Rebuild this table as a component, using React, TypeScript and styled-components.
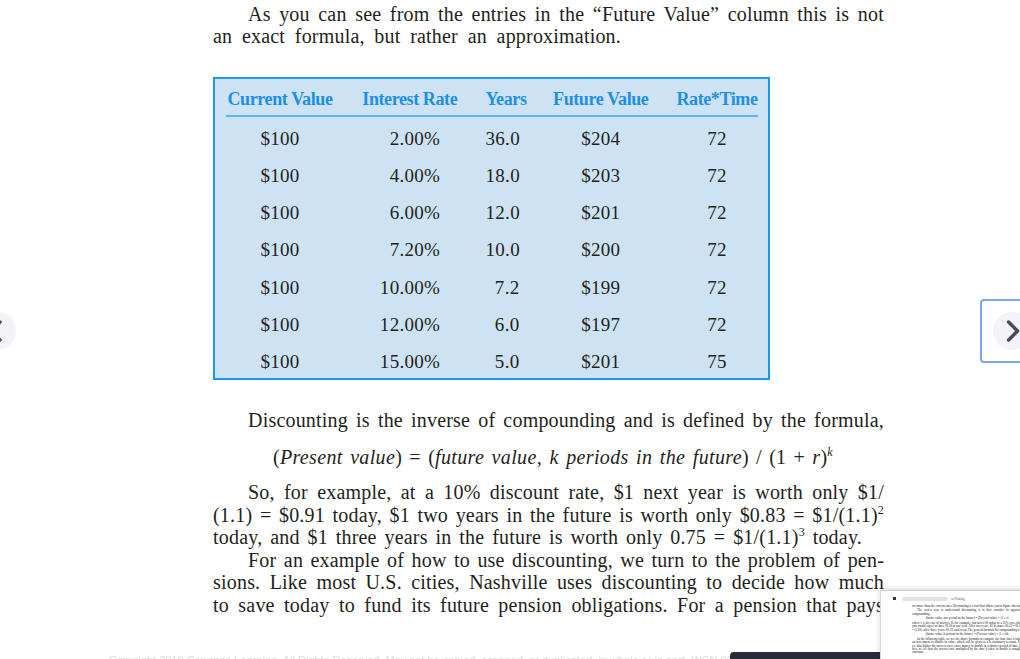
import React from 'react';
import styled, { createGlobalStyle } from 'styled-components';

const GlobalStyle = createGlobalStyle`
  html, body { margin: 0; padding: 0; background: #ffffff; }
  body {
    font-family: "Liberation Serif", "Times New Roman", serif;
    color: #231f20;
  }
  * { box-sizing: border-box; }
`;

const Screen = styled.div`
  position: relative;
  width: 1020px;
  height: 659px;
  overflow: hidden;
  background: #ffffff;
`;

const Article = styled.article`
  width: 884px;
  padding: 2.6px 0 0 213px;
  font-size: 20px;
  letter-spacing: 0.2px;
  line-height: 22.6px;
`;

const Paragraph = styled.div<{ $top?: number }>`
  margin-top: ${(p) => p.$top ?? 0}px;
`;

const Line = styled.span<{ $indent?: number; $width?: number }>`
  display: block;
  width: ${(p) => (p.$width ? `${p.$width}px` : '100%')};
  padding-left: ${(p) => p.$indent ?? 0}px;
  text-align: justify;
  text-align-last: justify;
`;

const I = styled.i`
  font-style: italic;
  letter-spacing: 0.35px;
`;

const Sup = styled.span`
  font-size: 0.6em;
  line-height: 0;
  position: relative;
  top: -0.65em;
`;

/* ---------- table ---------- */

const Table = styled.div`
  margin-top: 29.4px;
  width: 557px;
  border: 2px solid #1a98f0;
  background: #cde3f3;
  padding: 0 10px 0 11px;
  letter-spacing: 0;
`;

const cols = '108px 99px 40px 98px 82px';

const HeadRow = styled.div`
  display: grid;
  grid-template-columns: ${cols};
  justify-content: space-between;
  align-items: center;
  height: 38.3px;
  padding-top: 3px;
  border-bottom: 2px solid #5cb4ef;
`;

const HeadCell = styled.div`
  text-align: center;
  white-space: nowrap;
  font-size: 18px;
  font-weight: 700;
  letter-spacing: -0.4px;
  color: #1e8fe8;
  line-height: 20px;
`;

const Row = styled.div`
  display: grid;
  grid-template-columns: ${cols};
  justify-content: space-between;
  align-items: center;
  height: 37.25px;
  padding-top: 5px;
`;

const Cell = styled.div<{ $align: 'center' | 'right'; $pad?: number }>`
  text-align: ${(p) => p.$align};
  padding-right: ${(p) => p.$pad ?? 0}px;
  white-space: nowrap;
  font-size: 19px;
  letter-spacing: 0.3px;
  line-height: 20px;
  color: #231f20;
`;

/* ---------- footer ---------- */

const Footer = styled.footer`
  display: flex;
  align-items: flex-start;
  margin-top: 34.3px;
  padding-left: 109px;
  letter-spacing: 0;
`;

const Copyright = styled.span`
  width: 621px;
  overflow: hidden;
  white-space: nowrap;
  padding-top: 3px;
  font-family: "Liberation Sans", Arial, sans-serif;
  font-size: 11px;
  line-height: 13px;
  color: #dcdcdc;
`;

const ToolBar = styled.div`
  width: 170px;
  height: 24px;
  margin-top: 1px;
  background: #2a2a3b;
  border-radius: 4px 4px 0 0;
`;

/* ---------- overlays ---------- */

const NavButton = styled.button<{ $side: 'left' | 'right'; $focused?: boolean }>`
  position: absolute;
  top: 299px;
  left: ${(p) => (p.$side === 'left' ? '-35px' : '980px')};
  width: 64px;
  height: 64px;
  padding: 0;
  border: 2px solid ${(p) => (p.$focused ? '#7aa6f7' : 'transparent')};
  border-radius: 4px;
  background: transparent;
  display: flex;
  align-items: center;
  justify-content: center;
`;

const NavCircle = styled.span`
  width: 38px;
  height: 38px;
  border-radius: 50%;
  background: #f3f3f9;
  color: #4a4a56;
  display: flex;
  align-items: center;
  justify-content: center;
`;

const Thumb = styled.aside`
  position: absolute;
  left: 880px;
  top: 590px;
  width: 160px;
  height: 90px;
  overflow: hidden;
  background: #ffffff;
  border-top: 1px solid #cfcfcf;
  border-left: 1px solid #d8d8d8;
  box-shadow: 0 -1px 5px rgba(0, 0, 0, 0.18);
  padding: 5px 0 0 12px;
`;

const ThumbHead = styled.div`
  display: flex;
  align-items: center;
  gap: 3px;
  height: 5px;
`;

const ThumbSquare = styled.span`
  width: 3px;
  height: 3px;
  background: #333;
`;

const ThumbPill = styled.span`
  width: 46px;
  height: 4px;
  margin-left: 3px;
  border-radius: 2px;
  background: #e3e3e6;
`;

const ThumbLabel = styled.span`
  font-family: "Liberation Serif", serif;
  font-size: 12px;
  line-height: 12px;
  color: #555;
  transform: scale(0.28);
  transform-origin: left center;
  white-space: nowrap;
`;

const MiniPage = styled.div`
  margin: 3px 0 0 19px;
  width: 440px;
  transform: scale(0.25);
  transform-origin: top left;
  font-family: "Liberation Serif", serif;
  font-size: 12px;
  font-weight: 700;
  line-height: 13.5px;
  color: #6a6a6a;
  text-align: justify;
`;

const MiniP = styled.p<{ $center?: boolean; $indent?: boolean }>`
  margin: 0 0 5px 0;
  text-indent: ${(p) => (p.$indent ? '20px' : '0')};
  text-align: ${(p) => (p.$center ? 'center' : 'justify')};
`;

const Chevron = ({ dir }: { dir: 'left' | 'right' }) => (
  <svg width="36" height="36" viewBox="0 0 24 24" fill="none" stroke="currentColor" strokeWidth="2.3" strokeLinecap="round" strokeLinejoin="round">
    {dir === 'right' ? <path d="M9.7 6l6 6-6 6" /> : <path d="M14 6l-6 6 6 6" />}
  </svg>
);

type RowData = { cv: string; ir: string; y: string; fv: string; rt: string };

const rows: RowData[] = [
  { cv: '$100', ir: '2.00%', y: '36.0', fv: '$204', rt: '72' },
  { cv: '$100', ir: '4.00%', y: '18.0', fv: '$203', rt: '72' },
  { cv: '$100', ir: '6.00%', y: '12.0', fv: '$201', rt: '72' },
  { cv: '$100', ir: '7.20%', y: '10.0', fv: '$200', rt: '72' },
  { cv: '$100', ir: '10.00%', y: '7.2', fv: '$199', rt: '72' },
  { cv: '$100', ir: '12.00%', y: '6.0', fv: '$197', rt: '72' },
  { cv: '$100', ir: '15.00%', y: '5.0', fv: '$201', rt: '75' },
];

export default function App() {
  return (
    <>
      <GlobalStyle />
      <Screen>
        <Article>
          <Paragraph>
            <Line $indent={35}>As you can see from the entries in the “Future Value” column this is not</Line>
            <Line $width={408}>an exact formula, but rather an approximation.</Line>
          </Paragraph>

          <Table>
            <HeadRow>
              <HeadCell>Current Value</HeadCell>
              <HeadCell>Interest Rate</HeadCell>
              <HeadCell>Years</HeadCell>
              <HeadCell>Future Value</HeadCell>
              <HeadCell>Rate*Time</HeadCell>
            </HeadRow>
            {rows.map((r, i) => (
              <Row key={i}>
                <Cell $align="center">{r.cv}</Cell>
                <Cell $align="right" $pad={19}>{r.ir}</Cell>
                <Cell $align="right" $pad={6}>{r.y}</Cell>
                <Cell $align="center">{r.fv}</Cell>
                <Cell $align="center">{r.rt}</Cell>
              </Row>
            ))}
          </Table>

          <Paragraph $top={29.25}>
            <Line $indent={35}>Discounting is the inverse of compounding and is defined by the formula,</Line>
          </Paragraph>
          <Paragraph $top={14}>
            <Line $indent={60} $width={620}>
              (<I>Present value</I>) = (<I>future value, k periods in the future</I>) / (1 + <I>r</I>)
              <Sup><I>k</I></Sup>
            </Line>
          </Paragraph>
          <Paragraph $top={12.4}>
            <Line $indent={35}>So, for example, at a 10% discount rate, $1 next year is worth only $1/</Line>
            <Line>
              (1.1) = $0.91 today, $1 two years in the future is worth only $0.83 = $1/(1.1)<Sup>2</Sup>
            </Line>
            <Line $width={649}>
              today, and $1 three years in the future is worth only 0.75 = $1/(1.1)<Sup>3</Sup> today.
            </Line>
            <Line $indent={35}>For an example of how to use discounting, we turn to the problem of pen-</Line>
            <Line>sions. Like most U.S. cities, Nashville uses discounting to decide how much</Line>
            <Line>to save today to fund its future pension obligations. For a pension that pays</Line>
          </Paragraph>
        </Article>

        <Footer>
          <Copyright>
            Copyright 2019 Cengage Learning. All Rights Reserved. May not be copied, scanned, or duplicated, in whole or in part. WCN 02-200-203
          </Copyright>
          <ToolBar />
        </Footer>

        <NavButton $side="left" aria-label="Previous page">
          <NavCircle>
            <Chevron dir="left" />
          </NavCircle>
        </NavButton>
        <NavButton $side="right" $focused aria-label="Next page">
          <NavCircle>
            <Chevron dir="right" />
          </NavCircle>
        </NavButton>

        <Thumb>
          <ThumbHead>
            <ThumbSquare />
            <ThumbPill />
            <ThumbLabel>in Fishing</ThumbLabel>
          </ThumbHead>
          <MiniPage>
            <MiniP>
              are more than the current ones. Discounting is a tool that allows you to figure this out.
            </MiniP>
            <MiniP $indent>
              The easiest way to understand discounting is to first consider its opposite, compounding.
            </MiniP>
            <MiniP $center>(future value, one period in the future) = (Present value) × (1 + r)</MiniP>
            <MiniP>
              where r is the rate of interest. If, for example, you invest $1 today at a 10% rate, then you would
              expect to have $1.10 in one year. After two years, $1 becomes $1.21 = $1.10 × (1.10); after three
              years, $1.33, and so on. The general formula for compounding is
            </MiniP>
            <MiniP $center>(future value, k periods in the future) = (Present value) × (1 + r)k</MiniP>
            <MiniP $indent>
              In the following table, we use the above formula to compute the time that it takes an investment to
              double in value, which will be given as a k stationary account. We see that higher the interest rates
              cause money to double in a shorter period of time. In fact, we see that the interest rate multiplied by
              the time it takes to double is roughly constant.
            </MiniP>
          </MiniPage>
        </Thumb>
      </Screen>
    </>
  );
}
